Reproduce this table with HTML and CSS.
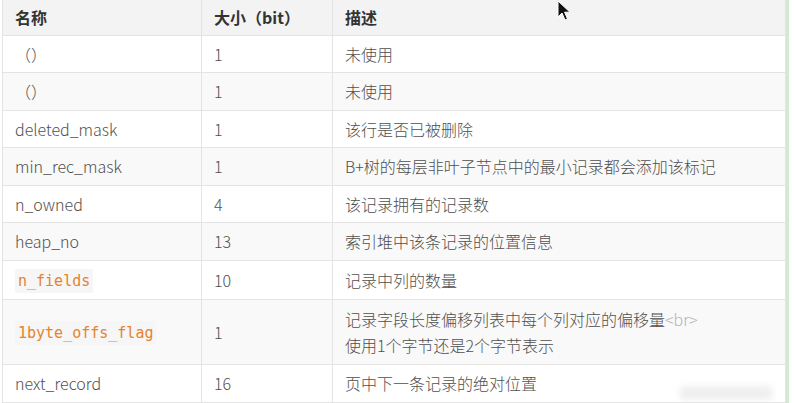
FILE: index.html
```html
<!DOCTYPE html>
<html lang="zh">
<head>
<meta charset="utf-8">
<title>记录头信息</title>
<link rel="stylesheet" href="styles.css">
</head>
<body>
<div class="page">
  <div class="content">
    <table class="info">
      <colgroup>
        <col class="c1"><col class="c2"><col class="c3">
      </colgroup>
      <thead>
        <tr><th>名称</th><th>大小（bit）</th><th>描述</th></tr>
      </thead>
      <tbody>
        <tr><td>（）</td><td>1</td><td>未使用</td></tr>
        <tr><td>（）</td><td>1</td><td>未使用</td></tr>
        <tr><td>deleted_mask</td><td>1</td><td>该行是否已被删除</td></tr>
        <tr><td>min_rec_mask</td><td>1</td><td>B+树的每层非叶子节点中的最小记录都会添加该标记</td></tr>
        <tr><td>n_owned</td><td>4</td><td>该记录拥有的记录数</td></tr>
        <tr><td>heap_no</td><td>13</td><td>索引堆中该条记录的位置信息</td></tr>
        <tr><td><code class="code">n_fields</code></td><td>10</td><td>记录中列的数量</td></tr>
        <tr class="tall"><td><code class="code">1byte_offs_flag</code></td><td>1</td><td>记录字段长度偏移列表中每个列对应的偏移量<span class="tag">&lt;br&gt;</span><br>使用1个字节还是2个字节表示</td></tr>
        <tr><td>next_record</td><td>16</td><td>页中下一条记录的绝对位置</td></tr>
      </tbody>
    </table>
  </div>
</div>
<svg class="cursor" width="16" height="22" viewBox="0 0 16 22">
  <path d="M1 1 L1 17 L5 13 L8 20 L10.5 19 L7.6 12.2 L13 12.2 Z" fill="#111" stroke="#fff" stroke-width="1"/>
</svg>
<div class="smudge"></div>
</body>
</html>
```
FILE: styles.css
```css
html, body {
  margin: 0;
  padding: 0;
  background: #ffffff;
}

body {
  width: 794px;
  height: 403px;
  overflow: hidden;
  position: relative;
  font-family: "Noto Sans CJK SC", "Noto Sans", sans-serif;
  font-size: 16px;
  font-weight: 300;
  color: #4f4f4f;
}

.page {
  display: flex;
}

.content {
  width: 784px;
  padding-left: 2px;
  border-right: 3px solid #d3ead2;
}

.info {
  width: 784px;
  border-collapse: collapse;
  table-layout: fixed;
}

.c1 { width: 199px; }
.c2 { width: 131px; }

.info th,
.info td {
  text-align: left;
  padding: 5px 12px;
  line-height: 26.5px;
  border: 1px solid #e4e4e4;
  border-top: none;
  vertical-align: middle;
}

.info th {
  background: #f3f3f3;
  font-weight: 700;
  color: #333333;
  padding-top: 4px;
  padding-bottom: 4px;
}

.info tbody tr:nth-child(even) td {
  background: #f9f9f9;
}

.info tr.tall td {
  padding-top: 5.5px;
  padding-bottom: 5.5px;
}

.code {
  font-family: "DejaVu Sans Mono", "Liberation Mono", monospace;
  font-size: 15px;
  font-weight: 400;
  color: #e5832f;
  background: #f6f6f6;
  padding: 3px 3px;
  border-radius: 2px;
}

.tag {
  color: #b4b4b4;
}

.cursor {
  position: absolute;
  left: 557px;
  top: 0px;
}

.smudge {
  position: absolute;
  left: 680px;
  top: 386px;
  width: 92px;
  height: 14px;
  background: #efefef;
  filter: blur(3px);
}
```
